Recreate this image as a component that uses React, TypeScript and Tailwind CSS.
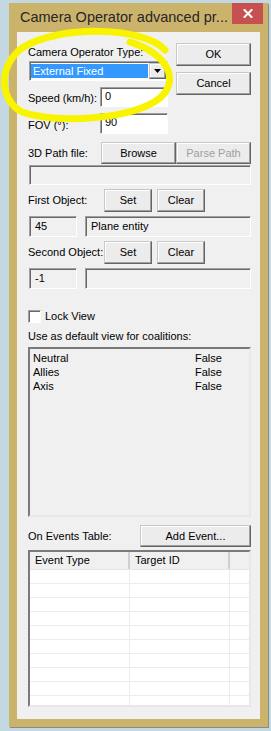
import React from "react";

const raised =
  "flex items-center justify-center bg-[#ececec] border border-t-[#c8c8c8] border-l-[#c8c8c8] border-r-[#646464] border-b-[#646464] shadow-[inset_-1px_-1px_0_#a0a0a0,inset_1px_1px_0_#ffffff]";
const sunken =
  "border border-t-[#a0a0a0] border-l-[#a0a0a0] border-r-[#ffffff] border-b-[#ffffff] shadow-[inset_1px_1px_0_#696969]";

function Btn({ className, children, disabled }: { className: string; children: React.ReactNode; disabled?: boolean }) {
  return (
    <div className={`${raised} ${className} ${disabled ? "text-[#a0a0a0]" : "text-black"}`}>
      {children}
    </div>
  );
}

const eventRows = Array.from({ length: 10 });

export default function App() {
  return (
    <div className="relative w-[271px] h-[731px] overflow-hidden bg-[#c4d8e2] font-['Liberation_Sans',Arial,sans-serif] text-[11px] text-black">
      {/* Dialog window */}
      <div className="ml-[9px] mt-[3px] w-[259px] h-[724px] flex flex-col bg-[#ccb36c] shadow-[1px_1px_0_#8a8a8a]">
        {/* Title bar */}
        <div className="h-[29px] flex justify-between">
          <div className="pl-[11px] self-center text-[14.5px] text-[#262626] leading-none whitespace-nowrap">
            Camera Operator advanced pr...
          </div>
          <div className="mr-[5px] w-[31px] h-[21px] bg-[#c75050] flex items-center justify-center">
            <svg width="10" height="9" viewBox="0 0 10 9">
              <path d="M1.5 1 L8.5 8 M8.5 1 L1.5 8" stroke="#ffffff" strokeWidth="2" strokeLinecap="square" />
            </svg>
          </div>
        </div>

        {/* Client area */}
        <div className="mx-[8px] h-[687px] bg-[#f0f0f0] pl-[11px] pr-[9px] flex flex-col">
          {/* Type / speed / fov + OK/Cancel */}
          <div className="mt-[11px] flex justify-between">
            <div className="flex flex-col w-[140px]">
              <div className="h-[18px] leading-[18px]">Camera Operator Type:</div>
              <div className={`ml-[1px] w-[139px] h-[20px] bg-white ${sunken} flex items-center pl-[1px] pr-[1px]`}>
                <div className="flex-1 h-[14px] bg-[#3399ff] text-white leading-[14px] pl-[2px]">External Fixed</div>
                <div className={`${raised} w-[17px] h-[16px] ml-[1px]`}>
                  <svg width="7" height="4" viewBox="0 0 7 4">
                    <path d="M0 0 H7 L3.5 4 Z" fill="#000" />
                  </svg>
                </div>
              </div>
              <div className="mt-[6px] flex h-[20px]">
                <div className="w-[72px] pt-[5px] leading-[12px]">Speed (km/h):</div>
                <div className={`w-[68px] h-[20px] bg-white ${sunken} pl-[4px] pt-[1px] leading-[14px]`}>0</div>
              </div>
              <div className="mt-[6px] flex h-[21px]">
                <div className="w-[72px] pt-[6px] leading-[12px]">FOV (°):</div>
                <div className={`w-[68px] h-[21px] bg-white ${sunken} pl-[4px] pt-[1px] leading-[14px]`}>90</div>
              </div>
            </div>
            <div className="flex flex-col w-[75px]">
              <Btn className="h-[23px] w-[75px]">OK</Btn>
              <Btn className="mt-[6px] h-[23px] w-[75px]">Cancel</Btn>
            </div>
          </div>

          {/* 3D path */}
          <div className="mt-[8px] flex items-center h-[22px]">
            <div className="w-[73px]">3D Path file:</div>
            <Btn className="h-[22px] w-[75px]">Browse</Btn>
            <Btn className="h-[22px] w-[75px]" disabled>
              Parse Path
            </Btn>
          </div>
          <div className={`mt-[1px] ml-[1px] w-[222px] h-[20px] bg-[#f0f0f0] ${sunken}`} />

          {/* First object */}
          <div className="mt-[4px] flex items-center h-[23px]">
            <div className="w-[76px]">First Object:</div>
            <Btn className="h-[23px] w-[48px]">Set</Btn>
            <Btn className="ml-[5px] h-[23px] w-[48px]">Clear</Btn>
          </div>
          <div className="mt-[4px] ml-[1px] flex h-[21px]">
            <div className={`w-[48px] h-[21px] bg-[#f0f0f0] ${sunken} flex items-center pl-[5px]`}>45</div>
            <div className={`ml-[8px] w-[166px] h-[21px] bg-[#f0f0f0] ${sunken} flex items-center pl-[5px]`}>Plane entity</div>
          </div>

          {/* Second object */}
          <div className="mt-[4px] flex items-center h-[23px]">
            <div className="w-[76px]">Second Object:</div>
            <Btn className="h-[23px] w-[48px]">Set</Btn>
            <Btn className="ml-[5px] h-[23px] w-[48px]">Clear</Btn>
          </div>
          <div className="mt-[4px] ml-[1px] flex h-[21px]">
            <div className={`w-[48px] h-[21px] bg-[#f0f0f0] ${sunken} flex items-center pl-[5px]`}>-1</div>
            <div className={`ml-[8px] w-[166px] h-[21px] bg-[#f0f0f0] ${sunken}`} />
          </div>

          {/* Lock view */}
          <div className="mt-[21px] flex items-center h-[13px]">
            <div className={`w-[13px] h-[13px] bg-white ${sunken}`} />
            <div className="ml-[4px]">Lock View</div>
          </div>
          <div className="mt-[6px] h-[14px] leading-[14px]">Use as default view for coalitions:</div>

          {/* Coalitions list */}
          <div className="mt-[4px] w-[223px] h-[170px] bg-[#f0f0f0] border-2 border-t-[#7a7a7a] border-l-[#7a7a7a] border-r-[#e8e8e8] border-b-[#e8e8e8] pt-[2px] pl-[3px]">
            {["Neutral", "Allies", "Axis"].map((c) => (
              <div key={c} className="grid grid-cols-[162px_1fr] h-[14px] leading-[14px]">
                <span>{c}</span>
                <span>False</span>
              </div>
            ))}
          </div>

          {/* Events */}
          <div className="mt-[8px] flex items-center justify-between h-[22px]">
            <div>On Events Table:</div>
            <Btn className="h-[22px] w-[111px]">Add Event...</Btn>
          </div>
          <div className="mt-[3px] w-[223px] h-[157px] bg-white border-2 border-t-[#7a7a7a] border-l-[#7a7a7a] border-r-[#e8e8e8] border-b-[#e8e8e8] overflow-hidden flex flex-col">
            <div className="h-[18px] flex bg-[#f0f0f0] border-b border-[#e5e5e5] shrink-0">
              <div className="w-[100px] border-r-2 border-[#d0d0d0] pl-[5px] flex items-center">Event Type</div>
              <div className="w-[100px] border-r-2 border-[#d0d0d0] pl-[5px] flex items-center">Target ID</div>
              <div className="flex-1" />
            </div>
            {eventRows.map((_, i) => (
              <div key={i} className="h-[14px] flex border-b border-[#ececec] shrink-0">
                <div className="w-[100px] border-r border-[#ececec]" />
                <div className="w-[100px] border-r border-[#ececec]" />
                <div className="flex-1" />
              </div>
            ))}
          </div>
        </div>
      </div>

      {/* Yellow highlight annotation */}
      <svg className="absolute left-0 top-0 pointer-events-none" width="271" height="731" viewBox="0 0 271 731">
        <path
          d="M165 50 C145 27, 60 24, 22 48 C-2 66, -1 100, 22 112 C55 124, 132 120, 160 98 C180 80, 168 54, 130 42"
          fill="none"
          stroke="#f8f400"
          strokeWidth="7"
          strokeLinecap="round"
        />
      </svg>
    </div>
  );
}
